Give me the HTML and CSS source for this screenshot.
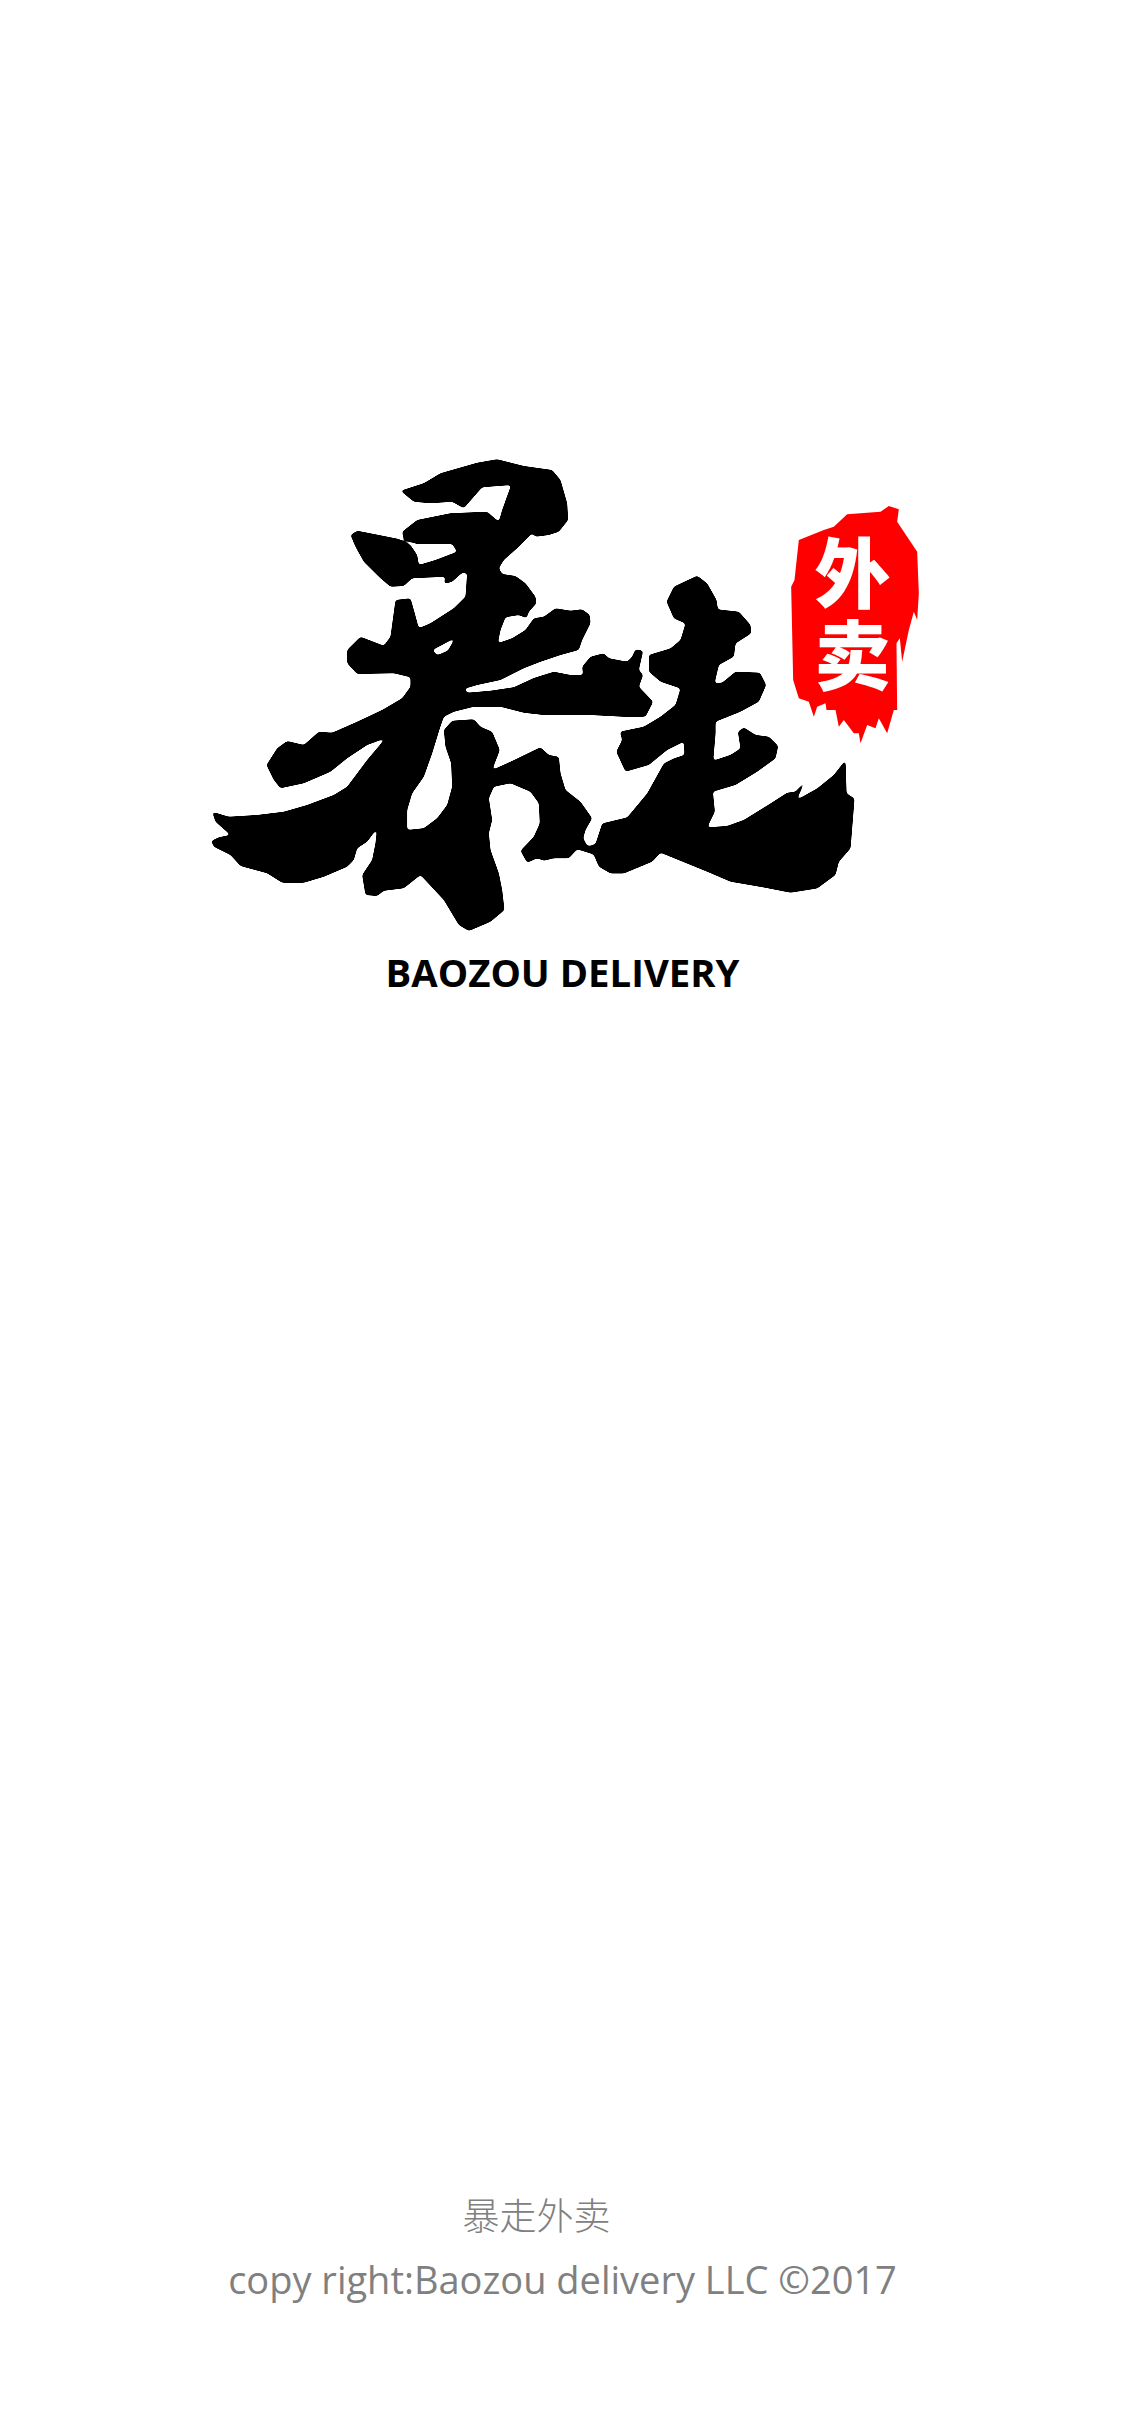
FILE: index.html
```html
<!DOCTYPE html>
<html lang="zh-CN">
<head>
<meta charset="utf-8">
<title>暴走外卖</title>
<link rel="stylesheet" href="styles.css">
</head>
<body>
<main class="splash">
  <section class="brand">
    <svg class="logo" viewBox="187.5 440 750 500" role="img" aria-label="暴走外卖 logo">
      <defs>
        <filter id="brush" filterUnits="userSpaceOnUse" x="187" y="440" width="751" height="500" color-interpolation-filters="sRGB">
          <feGaussianBlur stdDeviation="1.7"/>
          <feComponentTransfer>
            <feFuncA type="linear" slope="7" intercept="-2.9"/>
          </feComponentTransfer>
        </filter>
      </defs>
      <g class="brush">
        <g transform="translate(190 440) scale(.33333)">
          <path class="ink" fill-rule="evenodd" d="M630 152L700 130L750 100L860 68L920 58L1000 78L1085 90L1110 120L1130 190L1133 240L1105 275L1075 285L1035 290L1025 280L985 320L940 360L925 385L935 402L975 408L1005 430L1035 470L1038 490L1015 515L1008 535L985 525L945 532L930 570L922 610L965 595L1005 570L1030 535L1060 530L1095 505L1140 512L1175 508L1198 525L1200 550L1175 600L1165 630L1110 645L1050 665L1000 685L970 700L930 720L860 735L822 746L830 758L900 752L970 742L1030 714L1090 695L1140 705L1178 705L1175 680L1200 650L1240 640L1255 655L1310 665L1325 650L1335 628L1358 632L1345 690L1358 705L1345 740L1388 785L1365 830L1300 830L1200 825L1120 825L1060 825L1000 818L930 800L850 800L790 815L760 830L748 865L725 940L700 1010L665 1060L650 1110L650 1170L700 1165L740 1135L770 1095L785 1040L782 970L765 920L760 870L785 842L850 838L870 860L905 875L928 930L905 990L960 965L1050 922L1075 945L1105 950L1110 1000L1125 1050L1170 1085L1205 1135L1185 1170L1178 1195L1190 1217L1210 1220L1215 1245L1160 1228L1135 1255L1090 1255L1060 1262L1040 1255L1010 1268L990 1232L1030 1190L1048 1150L1045 1090L1020 1055L960 1030L910 1040L895 1075L905 1140L895 1180L900 1230L925 1300L935 1350L942 1410L900 1445L835 1473L805 1455L760 1380L690 1305L640 1345L580 1352L560 1368L525 1365L515 1305L545 1260L555 1210L560 1165L530 1205L500 1225L490 1260L470 1280L400 1310L340 1328L275 1328L230 1300L150 1278L120 1245L70 1220L62 1203L85 1192L120 1185L75 1145L65 1115L115 1130L200 1125L280 1115L350 1095L430 1065L470 1040L530 960L585 895L530 915L470 955L420 995L340 1030L270 1045L250 1020L228 975L260 925L290 903L340 915L385 875L425 878L500 845L575 810L635 775L660 740L660 712L610 700L500 702L470 670L470 630L510 590L580 617L600 590L615 480L660 475L670 510L685 565L720 550L790 505L825 470L830 400L815 398L785 425L760 432L765 410L665 415L640 438L600 440L570 415L520 365L495 320L480 285L500 272L565 285L625 297L660 315L680 345L685 375L735 360L800 335L785 312L680 312L640 300L635 275L680 240L780 220L890 215L925 245L935 210L962 135L875 142L850 170L820 205L785 185L720 190L670 185ZM726 630L794 594L772 632L740 646Z"/>
        </g>
        <g transform="translate(500 480) scale(.33333)">
          <path class="ink" d="M590 287L620 310L648 360L652 388L715 395L750 435L752 460L705 490L700 530L655 555L642 610L665 608L705 575L778 578L797 615L775 665L720 695L645 725L645 760L638 842L690 825L720 805L712 755L730 742L765 765L805 770L833 798L825 835L770 875L705 915L637 935L643 995L620 1042L680 1038L730 1020L810 970L860 938L885 935L916 900L888 960L950 925L1000 885L1035 840L1038 940L1062 955L1050 1105L1015 1145L1005 1185L950 1225L870 1238L790 1222L690 1205L620 1175L480 1118L455 1145L370 1180L330 1180L295 1160L280 1125L262 1100L285 1092L305 1030L380 1012L440 940L490 850L520 835L552 825L550 785L500 810L445 855L375 875L347 815L365 780L358 755L430 740L480 710L525 675L540 625L480 605L445 575L445 525L510 505L540 480L555 430L520 415L498 365L520 320Z"/>
        </g>
      </g>
      <g transform="translate(500 480) scale(.33333)">
        <path class="seal" d="M1165 78L1195 88L1190 125L1250 215L1255 340L1250 420L1240 395L1225 450L1205 545L1198 475L1188 490L1190 690L1180 690L1160 760L1135 715L1125 745L1100 735L1080 790L1075 760L1060 760L1030 720L1015 740L1005 690L978 690L975 670L950 680L940 710L925 665L895 655L878 600L872 320L882 300L895 180L970 150L1000 140L1040 103L1140 95Z"/>
      </g>
      <text class="seal-text" x="852" y="535">外卖</text>
    </svg>
    <h1 class="brand-name">BAOZOU DELIVERY</h1>
  </section>
  <footer class="legal">
    <p class="legal-name">暴走外卖</p>
    <p class="legal-copy">copy right:Baozou delivery LLC ©2017</p>
  </footer>
</main>
</body>
</html>
```

FILE: styles.css
```css
html, body {
  margin: 0;
  padding: 0;
  background: #fff;
}

.splash {
  width: 1125px;
  height: 2436px;
  display: flex;
  flex-direction: column;
  align-items: center;
  overflow: hidden;
}

.brand {
  display: flex;
  flex-direction: column;
  align-items: center;
  padding-top: 440px;
}

.logo {
  display: block;
  width: 750px;
  height: 500px;
}

.brush {
  filter: url(#brush);
}

.ink {
  fill: #000;
}

.seal {
  fill: #f00;
}

.seal-text {
  fill: #fff;
  font-family: "Noto Sans CJK SC", sans-serif;
  font-size: 76px;
  font-weight: 900;
  writing-mode: vertical-rl;
  text-orientation: upright;
  letter-spacing: 6px;
}

.brand-name {
  margin: 7px 0 0;
  font-family: "Open Sans", sans-serif;
  font-size: 38.3px;
  line-height: 50px;
  font-weight: 700;
  color: #000;
  white-space: nowrap;
}

.legal {
  margin-top: auto;
  padding-bottom: 132px;
  display: flex;
  flex-direction: column;
  align-items: center;
  gap: 15px;
  color: #808080;
}

.legal p {
  margin: 0;
  white-space: nowrap;
}

.legal-name {
  padding-right: 52px;
  font-family: "Noto Sans CJK SC", sans-serif;
  font-size: 37px;
  line-height: 50px;
  font-weight: 300;
}

.legal-copy {
  font-family: "Open Sans", sans-serif;
  font-size: 38px;
  line-height: 50px;
  font-weight: 400;
}
```
